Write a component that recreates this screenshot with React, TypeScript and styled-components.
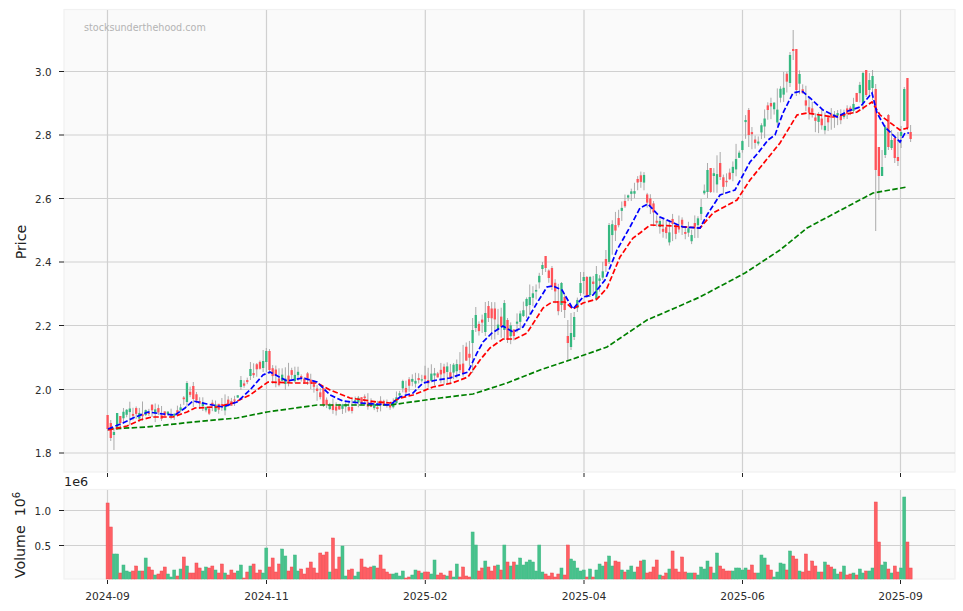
import React from 'react';
import styled, { createGlobalStyle } from 'styled-components';

const GlobalStyle = createGlobalStyle`
  html, body {
    margin: 0;
    padding: 0;
    background: #fff;
  }
`;

const Figure = styled.div`
  width: 963px;
  height: 611px;
  display: flex;
  flex-direction: column;
  overflow: hidden;
  font-family: "DejaVu Sans", sans-serif;
`;

const ChartSvg = styled.svg`
  display: block;
  width: 963px;
  flex: none;
  overflow: visible;
`;

const PlotArea = styled.rect`
  fill: #fafafa;
  stroke: #f1f1f1;
  stroke-width: 1.2;
`;

const GridLine = styled.line`
  stroke: #d0d0d0;
  stroke-width: 1.2;
`;

const TickMark = styled.line`
  stroke: #222;
  stroke-width: 1;
`;

const TickLabel = styled.text<{ $size?: number }>`
  fill: #2b2b2b;
  font-size: ${props => props.$size || 10.3}px;
`;

const AxisTitle = styled.text<{ $size?: number }>`
  fill: #222;
  font-size: ${props => props.$size || 14.2}px;
`;

const Watermark = styled.text`
  fill: #b4b4b4;
  font-size: 9.6px;
`;

const Wick = styled.line`
  stroke: #a2a2a2;
  stroke-width: 0.9;
`;

const Body = styled.rect<{ $up: boolean }>`
  fill: ${props => (props.$up ? '#35b880' : '#ff5258')};
`;

const VolumeBar = styled.rect<{ $up: boolean }>`
  fill: ${props => (props.$up ? '#47c28c' : '#ff5f64')};
  stroke: ${props => (props.$up ? '#3fb883' : '#ee4a50')};
  stroke-width: 0.5;
`;

const AverageLine = styled.polyline<{ $color: string }>`
  fill: none;
  stroke: ${props => props.$color};
  stroke-width: 1.7;
  stroke-dasharray: 5.5 2.4;
`;

const PLOT_LEFT = 64;
const PLOT_RIGHT = 955;
const BAR_STEP = 3.174;
const barX = (i: number) => 107.6 + (i - 1) * BAR_STEP;

const DATE_TICKS = [
  { x: 107.5, label: '2024-09' },
  { x: 266.5, label: '2024-11' },
  { x: 425.3, label: '2025-02' },
  { x: 584, label: '2025-04' },
  { x: 742.5, label: '2025-06' },
  { x: 900.5, label: '2025-09' },
];

const PRICE_TICKS = [
  { y: 71.5, label: '3.0' },
  { y: 135, label: '2.8' },
  { y: 198.5, label: '2.6' },
  { y: 262, label: '2.4' },
  { y: 325.5, label: '2.2' },
  { y: 389.5, label: '2.0' },
  { y: 453, label: '1.8' },
];

// bar heights in pixels, negative = red day
const VOLUMES = [
  -76, -52, 25, 25, -6, 14, 8, 7, -8, -13, 8, -8, 21, -12, -9, 4, -5, -8, -12, 5,
  2, 9, -3, 10, -22, 13, -6, -6, -16, -11, 8, 12, -11, -13, 9, -6, -15, 6, -4, -9,
  -6, 8, 14, -1, -7, 13, -15, -6, -9, 6, 31, -12, -21, -7, -15, 30, 23, -8, -12, 24,
  8, -10, -5, -11, -17, -11, -6, -26, -24, -27, 7, -41, -10, -22, 33, 3, -9, -10, 3, 7,
  -20, -12, -11, -12, 13, -11, -24, -10, -7, -5, 5, 6, 3, 8, -1, -2, 4, 9, -8, 6,
  -7, -7, 5, 19, -4, -6, -4, 3, -8, 2, 15, -2, -12, -3, -2, 47, 34, -8, -11, 18,
  -12, -8, -13, 14, -9, 34, -17, 13, -17, 14, 21, 14, 17, 19, 17, 8, 34, 7, -5, -3,
  -6, -2, -5, 11, -4, -34, 20, 18, 11, 8, 9, -2, 10, -2, 9, 15, 13, -17, 23, 13,
  -18, -17, 9, -7, 9, 13, 7, -12, -18, 19, -6, -7, -12, -19, 4, -3, -6, 10, -28, -10,
  -7, -22, -7, 6, 6, -6, 4, 12, 10, 18, -12, 6, 26, -13, -10, -8, -8, 8, 11, 11,
  9, 11, -9, -14, -6, 6, 24, 21, -14, -9, 2, 7, 16, 15, -9, 28, -23, -20, 8, -7,
  -25, -8, -18, -13, 7, -7, 17, -14, -12, 10, 5, -7, 13, -4, -5, 6, -4, 10, 6, -8,
  8, 11, -77, -37, 14, 17, -10, 6, -13, -7, 11, 82, -37, -11,
];

// silhouette of the candles: x, top of wicks, bottom of wicks
const ENVELOPE: [number, number, number][] = [
  [107, 415, 440], [117, 413, 428], [130, 401, 426], [145, 400, 423], [160, 403, 422],
  [175, 410, 420], [187, 382, 407], [195, 382, 407], [205, 401, 420], [225, 392, 417],
  [235, 395, 407], [252, 362, 382], [265, 348, 373], [275, 360, 392], [295, 363, 390],
  [310, 372, 390], [325, 395, 413], [340, 398, 417], [365, 390, 412], [390, 398, 413],
  [400, 380, 405], [418, 370, 388], [425, 365, 390], [440, 363, 385], [455, 360, 387],
  [470, 320, 373], [478, 307, 343], [490, 301, 340], [505, 300, 340], [515, 318, 352],
  [525, 290, 327], [540, 270, 297], [548, 256, 288], [560, 283, 320], [568, 313, 360],
  [580, 272, 313], [590, 277, 300], [600, 262, 300], [610, 222, 263], [620, 203, 228],
  [630, 185, 205], [643, 167, 192], [650, 190, 225], [660, 212, 235], [667, 213, 247],
  [680, 213, 240], [692, 222, 248], [700, 200, 240], [706, 163, 193], [717, 152, 200],
  [725, 173, 197], [740, 133, 173], [747, 110, 147], [757, 140, 157], [765, 98, 140],
  [778, 83, 128], [790, 55, 87], [795, 49, 90], [805, 83, 110], [815, 107, 135],
  [835, 107, 135], [850, 102, 117], [860, 73, 110], [868, 70, 97], [873, 70, 100],
];

// candles traced one by one: body top, body bottom, high, low
const TRACED: Record<number, [number, number, number, number]> = {
  1: [415, 429, 415, 431],
  2: [423, 438, 420, 441],
  3: [432, 435, 428, 450],
  4: [413, 428, 413, 430],
  5: [416, 423, 416, 428],
  26: [383, 402, 381, 407],
  28: [386, 399, 382, 407],
  43: [380, 387, 376, 390],
  46: [369, 376, 362, 380],
  50: [361, 368, 350, 372],
  51: [351, 362, 348, 372],
  52: [351, 370, 349, 374],
  69: [388, 405, 386, 407],
  116: [330, 343, 318, 373],
  117: [315, 328, 307, 332],
  120: [313, 332, 302, 336],
  121: [306, 318, 301, 322],
  126: [303, 330, 300, 340],
  127: [320, 340, 318, 343],
  138: [265, 269, 262, 275],
  139: [256, 268, 256, 272],
  141: [268, 287, 266, 290],
  144: [283, 305, 282, 312],
  145: [297, 310, 294, 318],
  146: [336, 343, 320, 360],
  147: [333, 347, 313, 350],
  148: [317, 337, 312, 340],
  150: [283, 293, 272, 296],
  151: [277, 281, 272, 294],
  152: [277, 296, 276, 298],
  153: [277, 295, 276, 297],
  155: [274, 299, 266, 301],
  158: [259, 266, 250, 272],
  159: [225, 262, 223, 264],
  190: [170, 192, 163, 198],
  191: [168, 192, 168, 193],
  194: [163, 177, 152, 180],
  203: [110, 135, 108, 147],
  216: [55, 83, 52, 87],
  217: [49, 51, 30, 60],
  218: [49, 90, 49, 96],
  239: [73, 103, 72, 110],
  240: [70, 95, 70, 97],
  241: [80, 90, 73, 96],
  242: [76, 88, 70, 100],
  243: [89, 170, 84, 231],
  244: [147, 176, 147, 200],
  245: [167, 176, 150, 176],
  246: [127, 155, 125, 158],
  247: [115, 147, 114, 150],
  248: [140, 148, 130, 150],
  249: [138, 158, 135, 163],
  250: [157, 161, 132, 166],
  251: [132, 136, 126, 148],
  252: [89, 121, 87, 121],
  253: [78, 128, 78, 130],
  254: [132, 139, 125, 142],
};

const BLUE_MA = '108,429 123,423 133,418 148,412 163,414 175,415 185,408 193,401 207,404 223,407 237,402 250,390 263,375 270,372 287,381 303,378 317,382 330,395 343,401 360,403 390,405 400,397 413,393 423,383 437,380 450,378 468,372 477,353 483,342 492,333 503,326 513,332 523,327 537,303 547,287 553,286 562,290 573,309 583,297 593,295 605,280 617,250 630,227 640,208 648,204 660,217 683,227 700,228 707,215 720,195 735,190 750,162 758,153 768,140 775,135 783,113 793,93 802,91 810,98 823,110 837,117 848,111 860,107 872,93 877,113 885,127 900,142 905,133 909,133';
const RED_MA = '108,430 127,426 140,420 152,417 173,417 187,412 195,408 217,407 233,403 250,395 268,382 293,383 317,383 330,390 350,398 377,402 390,403 400,398 413,395 433,387 452,383 468,377 480,360 490,348 503,339 515,339 527,333 543,308 552,302 565,302 573,309 583,303 597,299 607,288 620,257 633,238 640,233 650,225 673,226 700,228 713,213 737,200 750,180 780,143 797,115 807,113 833,117 857,112 872,102 880,115 900,130 908,128';
const GREEN_MA = '108,429 147,427 193,422 237,418 267,412 317,405 390,405 440,398 473,394 507,383 540,370 567,361 607,347 647,320 675,308 700,297 745,273 780,250 807,228 873,193 907,187';

const lerpEnvelope = (x: number): [number, number] => {
  const pts = ENVELOPE;
  if (x <= pts[0][0]) return [pts[0][1], pts[0][2]];
  for (let i = 1; i < pts.length; i++) {
    if (x <= pts[i][0]) {
      const t = (x - pts[i - 1][0]) / (pts[i][0] - pts[i - 1][0]);
      return [
        pts[i - 1][1] + (pts[i][1] - pts[i - 1][1]) * t,
        pts[i - 1][2] + (pts[i][2] - pts[i - 1][2]) * t,
      ];
    }
  }
  const last = pts[pts.length - 1];
  return [last[1], last[2]];
};

// small seeded generator so the untraced candles stay the same each load
const makeRandom = (seed: number) => () => {
  seed = (seed + 0x6d2b79f5) | 0;
  let t = Math.imul(seed ^ (seed >>> 15), 1 | seed);
  t = (t + Math.imul(t ^ (t >>> 7), 61 | t)) ^ t;
  return ((t ^ (t >>> 14)) >>> 0) / 4294967296;
};

const buildCandles = () => {
  const rnd = makeRandom(4021);
  return VOLUMES.map((vol, idx) => {
    const i = idx + 1;
    const x = barX(i);
    const traced = TRACED[i];
    if (traced) {
      return { i, x, up: vol > 0, top: traced[0], bottom: traced[1], high: traced[2], low: traced[3] };
    }
    const [envTop, envBottom] = lerpEnvelope(x);
    const span = envBottom - envTop;
    const high = envTop + span * 0.42 * rnd();
    const low = envBottom - span * 0.42 * rnd();
    const centre = high + (low - high) * (0.25 + 0.5 * rnd());
    const len = Math.max(1.2, span * (0.05 + 0.28 * rnd()));
    return {
      i,
      x,
      up: vol > 0,
      top: Math.max(high, centre - len / 2),
      bottom: Math.min(low, centre + len / 2),
      high,
      low,
    };
  });
};

const PriceChart: React.FC = () => {
  const candles = buildCandles();
  return (
    <ChartSvg height={478} viewBox="0 0 963 478">
      <PlotArea x={PLOT_LEFT} y={9.5} width={PLOT_RIGHT - PLOT_LEFT} height={462.5} />
      {DATE_TICKS.map(t => (
        <React.Fragment key={t.label}>
          <GridLine x1={t.x} x2={t.x} y1={10} y2={472} />
          <TickMark x1={t.x} x2={t.x} y1={473} y2={477} />
        </React.Fragment>
      ))}
      {PRICE_TICKS.map(t => (
        <React.Fragment key={t.label}>
          <GridLine x1={PLOT_LEFT} x2={PLOT_RIGHT} y1={t.y} y2={t.y} />
          <TickMark x1={59} x2={64} y1={t.y} y2={t.y} />
          <TickLabel x={51.5} y={t.y + 4} textAnchor="end">{t.label}</TickLabel>
        </React.Fragment>
      ))}
      <Watermark x={84} y={31}>stocksunderthehood.com</Watermark>
      <AxisTitle x={26} y={242} textAnchor="middle" transform="rotate(-90 26 242)">Price</AxisTitle>
      {candles.map(c => (
        <Wick key={c.i} x1={c.x} x2={c.x} y1={c.high} y2={c.low} />
      ))}
      {candles.map(c => (
        <Body key={c.i} $up={c.up} x={c.x - 1.15} y={c.top} width={2.3} height={c.bottom - c.top} />
      ))}
      <AverageLine $color="#008000" points={GREEN_MA} />
      <AverageLine $color="#ff0000" points={RED_MA} />
      <AverageLine $color="#0000ff" points={BLUE_MA} />
    </ChartSvg>
  );
};

const VolumeChart: React.FC = () => (
  <ChartSvg height={133} viewBox="0 478 963 133">
    <PlotArea x={PLOT_LEFT} y={489.5} width={PLOT_RIGHT - PLOT_LEFT} height={89.5} />
    {DATE_TICKS.map(t => (
      <React.Fragment key={t.label}>
        <GridLine x1={t.x} x2={t.x} y1={490} y2={579} />
        <TickMark x1={t.x} x2={t.x} y1={580} y2={584} />
        <TickLabel $size={10.7} x={t.x} y={600} textAnchor="middle">{t.label}</TickLabel>
      </React.Fragment>
    ))}
    {[{ y: 510.5, label: '1.0' }, { y: 545.5, label: '0.5' }].map(t => (
      <React.Fragment key={t.label}>
        <GridLine x1={PLOT_LEFT} x2={PLOT_RIGHT} y1={t.y} y2={t.y} />
        <TickMark x1={59} x2={64} y1={t.y} y2={t.y} />
        <TickLabel x={51} y={t.y + 4} textAnchor="end">{t.label}</TickLabel>
      </React.Fragment>
    ))}
    {VOLUMES.map((vol, idx) => (
      <VolumeBar
        key={idx}
        $up={vol > 0}
        x={barX(idx + 1) - 1.5}
        y={579 - Math.abs(vol)}
        width={3}
        height={Math.abs(vol)}
      />
    ))}
    <AxisTitle $size={12.8} x={64} y={486}>1e6</AxisTitle>
    <AxisTitle x={25} y={535} textAnchor="middle" transform="rotate(-90 25 535)">
      Volume{'\u00a0\u00a0'}10<tspan fontSize={10} dy={-5}>6</tspan>
    </AxisTitle>
  </ChartSvg>
);

const App: React.FC = () => (
  <>
    <GlobalStyle />
    <Figure>
      <PriceChart />
      <VolumeChart />
    </Figure>
  </>
);

export default App;
